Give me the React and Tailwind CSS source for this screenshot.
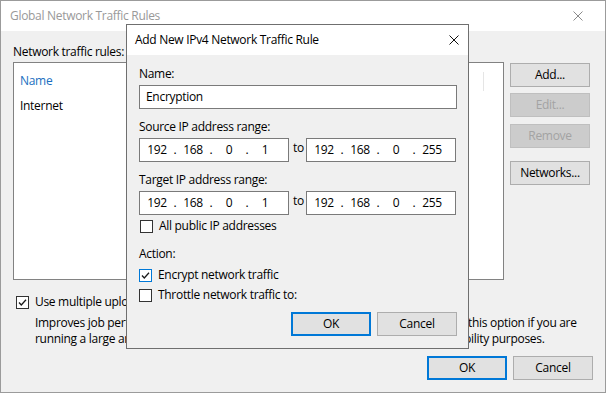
const Check = () => (
  <svg width="11" height="11" viewBox="0 0 11 11" className="block">
    <path d="M2 5.5 L4.3 8 L9 2.8" fill="none" stroke="#1a1a1a" strokeWidth="1.3" />
  </svg>
);

const Checkbox = ({ checked, focused }) => (
  <div
    className={`w-[13px] h-[13px] border bg-white flex items-center justify-center shrink-0 ${
      focused ? "border-[#0078d7]" : "border-[#333333]"
    }`}
  >
    {checked && <Check />}
  </div>
);

const CloseX = ({ color }) => (
  <svg width="10" height="10" viewBox="0 0 10 10" className="block">
    <path d="M0.5 0.5 L9.5 9.5 M9.5 0.5 L0.5 9.5" stroke={color} strokeWidth="1" />
  </svg>
);

const Button = ({ children, disabled, def, className = "" }) => (
  <div
    className={`w-[80px] h-[24px] flex items-center justify-center leading-none ${
      disabled
        ? "bg-[#cccccc] border border-[#bfbfbf] text-[#a3a3a3]"
        : def
        ? "bg-[#e1e1e1] border-2 border-[#0078d7] text-black"
        : "bg-[#e1e1e1] border border-[#adadad] text-black"
    } ${className}`}
  >
    {children}
  </div>
);

const IpBox = ({ parts }) => (
  <div className="w-[150px] h-[24px] border border-[#7a7a7a] bg-white flex items-center pl-[2px]">
    <span className="w-[30px] text-center">{parts[0]}</span>
    <span className="w-[6px] text-center">.</span>
    <span className="w-[30px] text-center">{parts[1]}</span>
    <span className="w-[6px] text-center">.</span>
    <span className="w-[30px] text-center">{parts[2]}</span>
    <span className="w-[6px] text-center">.</span>
    <span className="w-[30px] text-center">{parts[3]}</span>
  </div>
);

const IpRow = () => (
  <div className="flex items-start">
    <IpBox parts={["192", "168", "0", "1"]} />
    <span className="w-[17px] pl-[4px] mt-[2px] leading-[16px]">to</span>
    <IpBox parts={["192", "168", "0", "255"]} />
  </div>
);

export default function App() {
  return (
    <div className="relative w-[606px] h-[393px] overflow-hidden bg-[#f0f0f0] text-[12px] leading-[16px] tracking-[-0.3px] text-black font-['Open_Sans',sans-serif]">
      {/* Outer window */}
      <div className="w-[606px] h-[393px] border border-[#9b9b9b] flex flex-col">
        <div className="h-[30px] bg-white flex items-center justify-between pl-[9px] pr-[22px] shrink-0">
          <span className="text-[#999999]">Global Network Traffic Rules</span>
          <CloseX color="#8a8a8a" />
        </div>
        <div className="flex-1 flex flex-col pl-[12px] pt-[13px]">
          <div>Network traffic rules:</div>
          <div className="flex mt-[2px] gap-[6px]">
            <div className="w-[491px] h-[218px] bg-white border border-[#828282] flex flex-col">
              <div className="flex items-center h-[22px] mt-[7px]">
                <span className="pl-[6px] text-[#1a6fc0] flex-1">Name</span>
                <div className="w-px h-[19px] bg-[#e5e5e5] mr-[19px]" />
              </div>
              <div className="pl-[6px] mt-[6px]">Internet</div>
            </div>
            <div className="flex flex-col pt-[1px]">
              <Button>Add...</Button>
              <Button disabled className="mt-[6px]">Edit...</Button>
              <Button disabled className="mt-[7px]">Remove</Button>
              <Button className="mt-[13px]">Networks...</Button>
            </div>
          </div>
          <div className="flex items-center gap-[6px] mt-[14px] ml-[3px] h-[16px]">
            <Checkbox checked />
            <span>Use multiple upload streams per job</span>
          </div>
          <div className="pl-[22px] mt-[5px] flex flex-col">
            <div className="flex whitespace-nowrap">
              <span className="w-[433px] overflow-hidden shrink-0">Improves job performance over high latency links. Disable</span>
              <span>this option if you are</span>
            </div>
            <div className="flex whitespace-nowrap">
              <span className="w-[429px] overflow-hidden shrink-0">running a large amount of concurrent jobs for compati</span>
              <span>bility purposes.</span>
            </div>
          </div>
          <div className="flex justify-end gap-[6px] mt-[9px] pr-[12px]">
            <Button def>OK</Button>
            <Button>Cancel</Button>
          </div>
        </div>
      </div>

      {/* Modal dialog */}
      <div className="absolute left-[126px] top-[24px] w-[343px] h-[325px] border border-[#6f6f6f] bg-[#f0f0f0] flex flex-col">
        <div className="h-[30px] bg-white flex items-center justify-between pl-[8px] pr-[9px] shrink-0">
          <span>Add New IPv4 Network Traffic Rule</span>
          <CloseX color="#111111" />
        </div>
        <div className="flex flex-col pl-[12px] pt-[11px]">
          <div>Name:</div>
          <div className="w-[318px] h-[24px] mt-[3px] border border-[#7a7a7a] bg-white flex items-center pl-[6px]">
            Encryption
          </div>
          <div className="mt-[10px]">Source IP address range:</div>
          <div className="mt-[3px]"><IpRow /></div>
          <div className="mt-[10px]">Target IP address range:</div>
          <div className="mt-[3px]"><IpRow /></div>
          <div className="flex items-center gap-[6px] mt-[3px] ml-[1px] h-[16px]">
            <Checkbox />
            <span>All public IP addresses</span>
          </div>
          <div className="mt-[12px]">Action:</div>
          <div className="flex items-center gap-[6px] mt-[5px] h-[16px]">
            <Checkbox checked focused />
            <span>Encrypt network traffic</span>
          </div>
          <div className="flex items-center gap-[6px] mt-[4px] h-[16px]">
            <Checkbox />
            <span>Throttle network traffic to:</span>
          </div>
          <div className="flex justify-end gap-[6px] mt-[9px] pr-[11px]">
            <Button def>OK</Button>
            <Button>Cancel</Button>
          </div>
        </div>
      </div>
    </div>
  );
}
